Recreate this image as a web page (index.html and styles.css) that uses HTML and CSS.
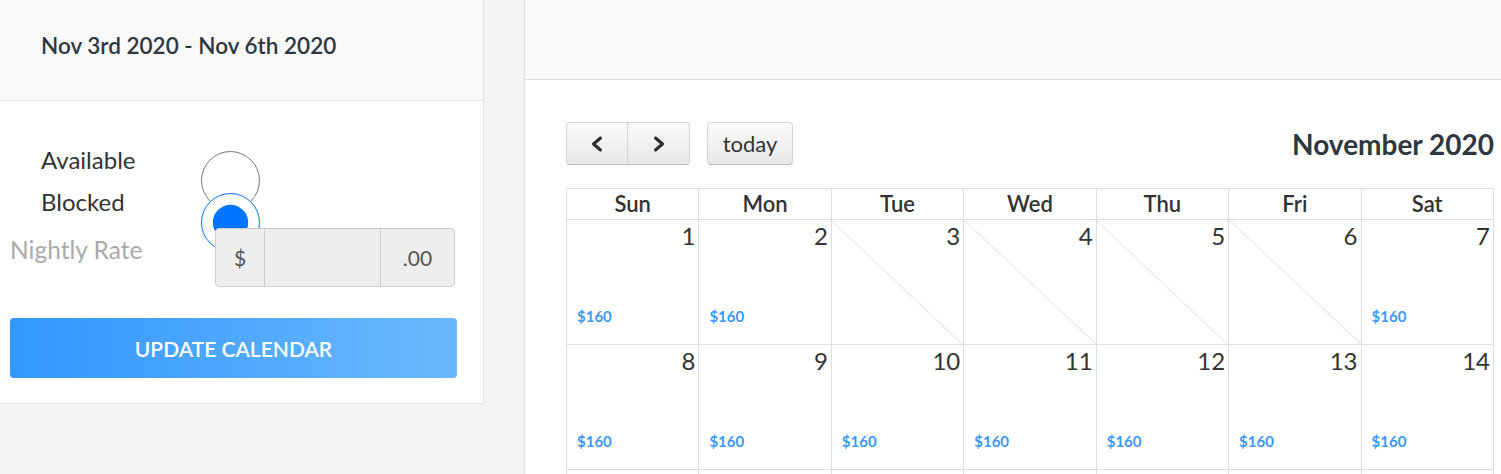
FILE: index.html
```html
<!DOCTYPE html>
<html lang="en">
<head>
  <meta charset="UTF-8">
  <meta name="viewport" content="width=device-width, initial-scale=1.0">
  <title>Calendar</title>
  <link rel="stylesheet" href="styles.css">
</head>
<body>
  <div class="page">
    <!-- Selected range -->
    <aside class="range-card">
      <div class="range-head">
        <h2>Nov 3rd 2020 - Nov 6th 2020</h2>
      </div>
      <form class="range-body">
        <div class="status-row">
          <label for="statusAvailable">Available</label>
          <input type="radio" name="status" id="statusAvailable">
        </div>
        <div class="status-row">
          <label for="statusBlocked">Blocked</label>
          <input type="radio" name="status" id="statusBlocked" checked>
        </div>
        <div class="rate-row">
          <span class="rate-label">Nightly Rate</span>
          <div class="input-group">
            <span class="addon addon-left">$</span>
            <input type="text" class="rate-input">
            <span class="addon addon-right">.00</span>
          </div>
        </div>
        <button type="submit" class="update-btn">UPDATE CALENDAR</button>
      </form>
    </aside>

    <!-- Calendar -->
    <main class="calendar-panel">
      <div class="panel-head"></div>
      <div class="calendar">
        <div class="toolbar">
          <div class="btn-group">
            <button type="button" class="fc-btn nav-btn" aria-label="prev">
              <svg width="16" height="18" viewBox="0 0 16 18"><polyline points="11.5,3 4.5,9 11.5,15" fill="none" stroke="#2b2b2b" stroke-width="3" stroke-linecap="round" stroke-linejoin="round"/></svg>
            </button>
            <button type="button" class="fc-btn nav-btn" aria-label="next">
              <svg width="16" height="18" viewBox="0 0 16 18"><polyline points="4.5,3 11.5,9 4.5,15" fill="none" stroke="#2b2b2b" stroke-width="3" stroke-linecap="round" stroke-linejoin="round"/></svg>
            </button>
          </div>
          <button type="button" class="fc-btn today-btn">today</button>
          <h2 class="month-title">November 2020</h2>
        </div>

        <table class="month">
          <thead>
            <tr>
              <th>Sun</th><th>Mon</th><th>Tue</th><th>Wed</th><th>Thu</th><th>Fri</th><th>Sat</th>
            </tr>
          </thead>
          <tbody>
            <tr>
              <td><div class="day"><span class="num">1</span><span class="price">$160</span></div></td>
              <td><div class="day"><span class="num">2</span><span class="price">$160</span></div></td>
              <td class="blocked"><div class="day"><span class="num">3</span></div></td>
              <td class="blocked"><div class="day"><span class="num">4</span></div></td>
              <td class="blocked"><div class="day"><span class="num">5</span></div></td>
              <td class="blocked"><div class="day"><span class="num">6</span></div></td>
              <td><div class="day"><span class="num">7</span><span class="price">$160</span></div></td>
            </tr>
            <tr>
              <td><div class="day"><span class="num">8</span><span class="price">$160</span></div></td>
              <td><div class="day"><span class="num">9</span><span class="price">$160</span></div></td>
              <td><div class="day"><span class="num">10</span><span class="price">$160</span></div></td>
              <td><div class="day"><span class="num">11</span><span class="price">$160</span></div></td>
              <td><div class="day"><span class="num">12</span><span class="price">$160</span></div></td>
              <td><div class="day"><span class="num">13</span><span class="price">$160</span></div></td>
              <td><div class="day"><span class="num">14</span><span class="price">$160</span></div></td>
            </tr>
            <!-- proxima semana, fora da area visivel -->
            <tr>
              <td><div class="day"></div></td>
              <td><div class="day"></div></td>
              <td><div class="day"></div></td>
              <td><div class="day"></div></td>
              <td><div class="day"></div></td>
              <td><div class="day"></div></td>
              <td><div class="day"></div></td>
            </tr>
          </tbody>
        </table>
      </div>
    </main>
  </div>
</body>
</html>
```

FILE: styles.css
```css
body {
  margin: 0;
  background-color: #f3f3f3;
  font-family: Lato, "Open Sans", Arial, sans-serif;
  color: #333;
}
.page {
  display: flex;
  align-items: flex-start;
  gap: 40px;
  height: 474px;
  overflow: hidden;
}

/* Card da esquerda */
.range-card {
  width: 483px;
  flex-shrink: 0;
  background: #fff;
  border-right: 1px solid #e3e3e3;
  border-bottom: 1px solid #e3e3e3;
}
.range-head {
  height: 101px;
  display: flex;
  align-items: center;
  padding-left: 41px;
  padding-bottom: 9px;
  box-sizing: border-box;
  background: #f9f9f9;
  border-bottom: 1px solid #e3e3e3;
}
.range-head h2 {
  margin: 0;
  font-size: 22.5px;
  font-weight: 600;
  color: #2e3740;
}
.range-body {
  padding: 38px 26px 25px 10px;
}
.status-row {
  display: flex;
  align-items: flex-start;
  height: 42px;
  padding-left: 31px;
}
.status-row label {
  width: 160px;
  font-size: 24px;
  line-height: 42px;
}
.status-row input {
  width: 59px;
  height: 59px;
  margin: 12px 0 0 0;
}
.rate-row {
  display: flex;
  align-items: flex-start;
  margin-top: 5px;
  position: relative; /* fica por cima do radio */
}
.rate-label {
  width: 205px;
  margin-top: 7px;
  font-size: 24.5px;
  color: #aaa;
}
.input-group {
  display: flex;
  width: 240px;
  height: 59px;
  border: 1px solid #ccc;
  border-radius: 4px;
  background: #eee;
  box-sizing: border-box;
  overflow: hidden;
}
.addon {
  display: flex;
  align-items: center;
  justify-content: center;
  font-size: 21px;
  color: #555;
}
.addon-left {
  width: 48px;
  border-right: 1px solid #ccc;
}
.addon-right {
  width: 73px;
  border-left: 1px solid #ccc;
}
.rate-input {
  flex: 1;
  min-width: 0;
  border: none;
  background: #eee;
  font-size: 20px;
}
.update-btn {
  display: block;
  width: 447px;
  height: 60px;
  margin-top: 31px;
  border: none;
  border-radius: 4px;
  background: linear-gradient(to right, #3197ff, #6cb9fc);
  color: #fff;
  font-family: inherit;
  font-size: 21px;
  font-weight: 600;
  cursor: pointer;
}

/* Painel do calendario */
.calendar-panel {
  flex: 1;
  align-self: stretch;
  background: #fff;
  border-left: 1px solid #ddd;
}
.panel-head {
  height: 79px;
  background: #f9f9f9;
  border-bottom: 1px solid #ddd;
}
.calendar {
  padding: 42px 7px 0 41px;
}
.toolbar {
  display: flex;
  align-items: center;
  height: 43px;
  margin-bottom: 23px;
}
.btn-group {
  display: flex;
}
.fc-btn {
  height: 43px;
  border: 1px solid #d6d6d6;
  border-bottom-color: #bfbfbf;
  background: linear-gradient(#fafafa, #e8e8e8);
  box-shadow: inset 0 1px 0 rgba(255, 255, 255, 0.2), 0 1px 2px rgba(0, 0, 0, 0.05);
  font-family: inherit;
  color: #333;
  cursor: pointer;
  padding: 0;
}
.nav-btn {
  width: 62px;
  display: flex;
  align-items: center;
  justify-content: center;
}
.nav-btn:first-child {
  border-radius: 4px 0 0 4px;
}
.nav-btn:last-child {
  border-radius: 0 4px 4px 0;
  border-left: none;
}
.today-btn {
  width: 86px;
  margin-left: 17px;
  border-radius: 4px;
  font-size: 22px;
}
.month-title {
  margin: 0 0 0 auto;
  font-size: 28px;
  font-weight: 700;
  color: #2e3740;
}
.month {
  width: 928px;
  border-collapse: collapse;
  table-layout: fixed;
}
.month th {
  height: 30px;
  padding: 0;
  border: 1px solid #ddd;
  font-size: 22px;
  font-weight: 600;
  line-height: 28px;
}
.month td {
  padding: 0;
  border: 1px solid #ddd;
  vertical-align: top;
}
.month td.blocked {
  border-top-color: #d8e6ee;
  background: linear-gradient(to top right, transparent calc(50% - 1px), #dde2e6 50%, transparent calc(50% + 1px));
}
.day {
  height: 124px;
  display: flex;
  flex-direction: column;
  justify-content: space-between;
  padding: 1px 3px 19px 10px;
  box-sizing: border-box;
}
.num {
  align-self: flex-end;
  font-size: 24px;
}
.price {
  font-size: 15px;
  font-weight: 700;
  color: #3d98f8;
}
```
